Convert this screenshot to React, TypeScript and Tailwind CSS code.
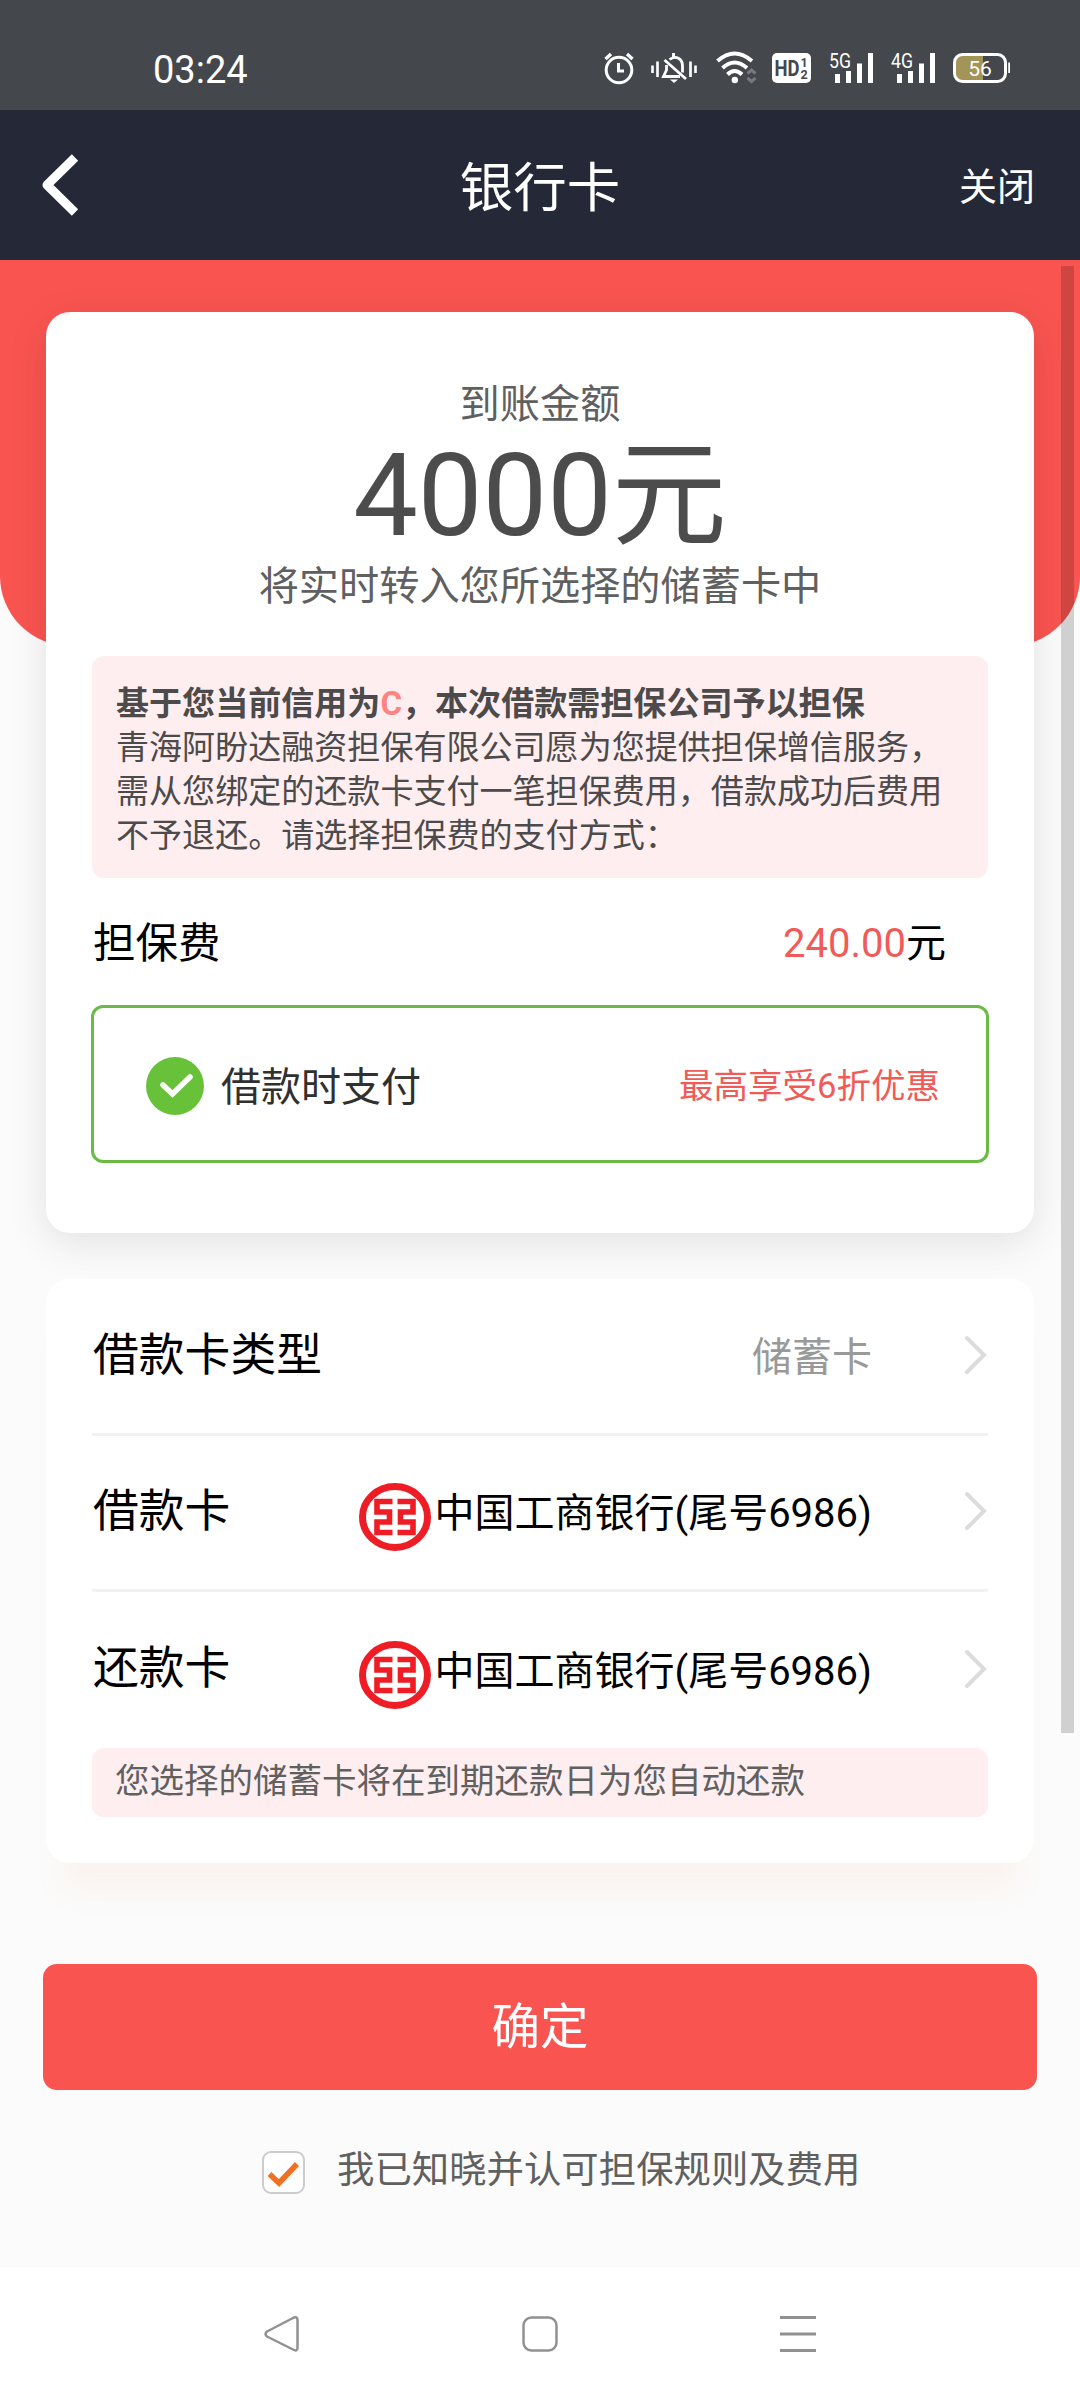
import { ReactNode } from "react"

const BankLogo = () => (
  <svg width="72" height="68" viewBox="0 0 72 68" fill="none" className="mt-1.5 shrink-0">
    <ellipse cx="36" cy="34" rx="32.5" ry="30.5" stroke="#ee1c25" strokeWidth="7" />
    <g stroke="#ee1c25" strokeWidth="5.600">
      <path d="M33.500 18.500H18V29H30.500V39H18V49.500H33.500" />
      <path d="M38.500 18.500H54V29H41.500V39H54V49.500H38.500" />
    </g>
  </svg>
)

interface CardRowProps {
  label: string
  border?: boolean
  children: ReactNode
}

function CardRow({ label, border, children }: CardRowProps) {
  return (
    <div className={`flex h-[156px] items-center ${border ? "border-b-3 border-[#f2f2f2]" : ""}`}>
      <span className="pb-0.5 pl-px text-[45.8px] text-black">{label}</span>
      <div className="ml-auto flex items-center pt-[3px] text-[40px]">{children}</div>
      <svg
        width="24"
        height="40"
        viewBox="0 0 24 40"
        fill="none"
        stroke="#dcdcdc"
        strokeWidth="4"
        strokeLinecap="round"
        className="mb-[3px] ml-[92px]"
      >
        <path d="M3 3L20 20L3 37" />
      </svg>
    </div>
  )
}

function StatusBar() {
  return (
    <div className="flex h-[110px] items-center bg-[#44474c] pt-7 text-white">
      <span className="ml-[153px] pt-0.5 text-[38px]">03:24</span>
      <svg className="ml-auto mr-[70px]" width="410" height="40" viewBox="600 50 410 40" fill="none" stroke="#fff">
        {/* alarm */}
        <circle cx="619" cy="71" r="12.8" strokeWidth="3" />
        <path d="M618.5 64V72H624" strokeWidth="3" />
        <path d="M605.5 60L611 55M627 55L632.5 60" strokeWidth="3.4" />
        {/* muted bell */}
        <path d="M652.5 66.5V74M657.5 62.5V78M690.5 62.5V78M695.5 66.5V74" strokeWidth="2.6" />
        <path d="M669.5 60.5C676 55.5 682.5 60 682.5 67V73.5M666.500 66V71L663.500 77.500H680" strokeWidth="2.8" />
        <path d="M664.5 61L686 80" strokeWidth="2.8" />
        <path d="M673.5 54V58" strokeWidth="3" />
        <path d="M670 80.500H678L674 84Z" fill="#fff" stroke="none" />
        {/* wifi */}
        <path d="M717.5 62Q734.5 47 752 62M722.5 69Q734.5 58 747 69M727.5 75.500Q734.5 68.500 742 75.500" strokeWidth="4" />
        <circle cx="734.8" cy="81" r="3.2" fill="#fff" stroke="none" />
        <path d="M747.5 74.500L751.500 71L755.500 74.500M747.500 79L751.500 82.500L755.500 79" stroke="#75787c" strokeWidth="3" />
        {/* HD badge */}
        <rect x="772" y="54" width="39" height="30" rx="5" fill="#fff" stroke="none" />
        <g fill="#44474c" stroke="none" fontFamily="Roboto" fontWeight="700">
          <text x="774.5" y="77" fontSize="22" textLength="25" lengthAdjust="spacingAndGlyphs">HD</text>
          <text x="800.5" y="68" fontSize="12.5">1</text>
          <text x="800.5" y="80" fontSize="12.5">2</text>
        </g>
        {/* signals */}
        <g fill="#fff" stroke="none" fontFamily="Roboto" fontSize="20">
          <text x="829" y="68.500" textLength="22" lengthAdjust="spacingAndGlyphs">5G</text>
          <text x="891" y="68.500" textLength="22" lengthAdjust="spacingAndGlyphs">4G</text>
        </g>
        <path d="M837.5 75V84M848.5 72V84M859.5 64.500V84M870.5 54V84" strokeWidth="5" />
        <path d="M899.5 75V84M910.5 72V84M921.5 64.500V84M932.5 54V84" strokeWidth="5" />
        {/* battery */}
        <path d="M963 56H983V82H963Q955 82 955 74V64Q955 56 963 56Z" fill="#a39558" stroke="none" />
        <rect x="954.5" y="55.5" width="51" height="27" rx="8" strokeWidth="3" />
        <path d="M1009.5 63.500V74" strokeWidth="2.6" />
        <text x="980" y="76.500" fontSize="21" fontFamily="Roboto" textAnchor="middle" fill="#fff" stroke="none">56</text>
      </svg>
    </div>
  )
}

export default function App() {
  return (
    <div className="relative flex h-[2400px] w-[1080px] flex-col overflow-hidden bg-[#fbfbfb] font-[Roboto,'Noto_Sans_CJK_SC',sans-serif] leading-none text-[#606060]">
      <StatusBar />

      {/* Header */}
      <header className="grid h-[150px] grid-cols-3 items-center bg-[#252836] pl-[41px] pr-[45px] text-white">
        <svg width="40" height="62" viewBox="0 0 40 62" fill="none" stroke="#fff" strokeWidth="9" strokeLinejoin="round">
          <path d="M34 3.500L6 31L34 58.500" />
        </svg>
        <h1 className="pl-1 pt-2 text-center text-[53.5px]">银行卡</h1>
        <button className="justify-self-end pt-1 text-[38px]">关闭</button>
      </header>

      <main className="relative h-[2007px] px-[46px] pt-[52px]">
        <div className="absolute inset-x-0 top-0 h-[386px] rounded-b-[70px] bg-[#f95450]"></div>

        {/* Amount and guarantee fee */}
        <section className="relative flex h-[921px] flex-col rounded-[24px] bg-white px-[46px] shadow-[0_10px_40px_rgba(0,0,0,0.1)]">
          <div className="mt-[70px] text-center text-[40.2px] leading-[46px]">到账金额</div>
          <div className="mt-px text-center text-[115px] leading-[134px] text-[#4c4c4c]">4000元</div>
          <div className="text-center text-[40.2px] leading-[48px]">将实时转入您所选择的储蓄卡中</div>

          <div className="mt-[45px] h-[222px] rounded-xl bg-[#feeeef] pl-6 pt-[26px] text-[33.06px] leading-[44px] text-[#4c4a4a]">
            <p className="font-bold">
              基于您当前信用为<span className="text-[#fe8383]">C</span>，本次借款需担保公司予以担保
            </p>
            <p>青海阿盼达融资担保有限公司愿为您提供担保增信服务，</p>
            <p>需从您绑定的还款卡支付一笔担保费用，借款成功后费用</p>
            <p>不予退还。请选择担保费的支付方式：</p>
          </div>

          <div className="flex h-[127px] items-center justify-between pl-px pr-[42px] pt-1 text-black">
            <span className="pt-0.5 text-[42.5px]">担保费</span>
            <span className="text-[40px]">
              <span className="text-[#f15b57]">240.00</span>元
            </span>
          </div>

          <div className="-mx-px flex h-[158px] items-center rounded-xl border-3 border-[#6abb45] pl-[52px] pr-[46px] pt-[3px]">
            <svg width="58" height="58" viewBox="0 0 58 58" fill="none">
              <circle cx="29" cy="29" r="29" fill="#67c23a" />
              <path d="M17 28L26.500 37L44 20" stroke="#fff" strokeWidth="5.500" strokeLinecap="round" />
            </svg>
            <span className="ml-[17px] pt-1 text-[40px] text-[#303030]">借款时支付</span>
            <span className="ml-auto pt-px text-[34.5px] text-[#f15b57]">最高享受6折优惠</span>
          </div>
        </section>

        {/* Bank cards */}
        <section className="relative mt-[46px] h-[584px] rounded-[24px] bg-white px-[46px] pt-px shadow-[0_44px_30px_-16px_rgba(240,140,90,0.07)]">
          <CardRow label="借款卡类型" border>
            <span className="text-[#999]">储蓄卡</span>
          </CardRow>
          <CardRow label="借款卡" border>
            <BankLogo />
            <span className="ml-[3px] text-black">中国工商银行(尾号6986)</span>
          </CardRow>
          <CardRow label="还款卡">
            <BankLogo />
            <span className="ml-[3px] text-black">中国工商银行(尾号6986)</span>
          </CardRow>
          <div className="h-[69px] rounded-xl bg-[#feeeef] pl-[23px] text-[34.5px] leading-[67px]">
            您选择的储蓄卡将在到期还款日为您自动还款
          </div>
        </section>

        <button className="-mx-[3px] mt-[101px] block h-[126px] w-[994px] rounded-[14px] bg-[#f95450] pt-0.5 text-[48.5px] text-white">
          确定
        </button>

        <label className="mt-[61px] flex items-center pl-[216px] text-[37.4px]">
          <svg width="43" height="43" viewBox="0 0 43 43" fill="none">
            <rect x="1" y="1" width="41" height="41" rx="8" fill="#fff" stroke="#ccc" strokeWidth="2" />
            <path d="M7.500 23L17 32L35 13" stroke="#f37021" strokeWidth="5.500" />
          </svg>
          <span className="ml-8 pb-[3px]">我已知晓并认可担保规则及费用</span>
        </label>

        {/* Scrollbar */}
        <div className="absolute right-1.5 top-1.5 h-[1467px] w-[13px] bg-black/17"></div>
      </main>

      {/* System navigation */}
      <nav className="flex h-[133px] items-center justify-between bg-white px-[264px]">
        <svg width="36" height="36" viewBox="0 0 36 36" fill="none" stroke="#919191" strokeWidth="2.500" strokeLinejoin="round">
          <path d="M3 15.500L29 2Q33.500 0 33.500 4V32Q33.500 36 29 33.500L3 20.500Q0 18 3 15.500Z" />
        </svg>
        <svg width="36" height="36" viewBox="0 0 36 36" fill="none" stroke="#919191" strokeWidth="2.500">
          <rect x="1.500" y="1.500" width="33" height="33" rx="8" />
        </svg>
        <svg width="36" height="36" viewBox="0 0 36 36" stroke="#919191" strokeWidth="3">
          <path d="M0 1.500H36M0 18H36M0 34.500H36" />
        </svg>
      </nav>
    </div>
  )
}
